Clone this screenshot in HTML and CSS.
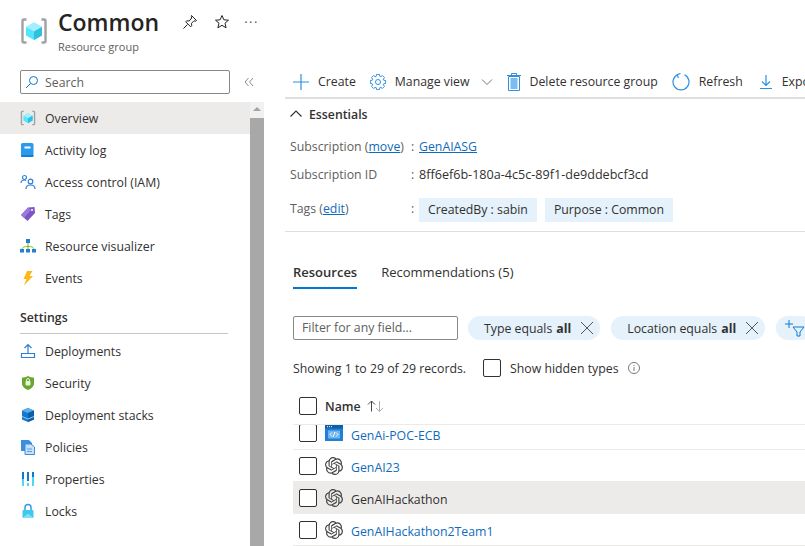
FILE: index.html
```html
<!DOCTYPE html>
<html lang="en">
<head>
    <meta charset="UTF-8">
    <title>Common - Resource group</title>
    <link rel="stylesheet" href="styles.css">
</head>
<body>
    <svg class="defs" width="0" height="0">
        <symbol id="rg" viewBox="0 0 28 28">
            <path d="M6.500 2.500H4a1.500 1.500 0 0 0-1.500 1.500v20A1.500 1.500 0 0 0 4 25.500h2.500M21.500 2.500H24A1.500 1.500 0 0 1 25.500 4v20a1.500 1.500 0 0 1-1.500 1.500h-2.500" fill="none" stroke="#a0a1a2" stroke-width="2.400"/>
            <path d="M14 5.500l8 4.500v8.500L14 23l-8-4.500V10z" fill="#50e6ff"/>
            <path d="M14 5.500l8 4.500-8 4.500L6 10z" fill="#a5eeff"/>
            <path d="M22 10v8.500L14 23v-8.500z" fill="#32bedd"/>
        </symbol>
        <symbol id="gpt" viewBox="0 0 24 24">
            <path fill="#444" d="M22.2819 9.8211a5.9847 5.9847 0 0 0-.5157-4.9108 6.0462 6.0462 0 0 0-6.5098-2.9A6.0651 6.0651 0 0 0 4.9807 4.1818a5.9847 5.9847 0 0 0-3.9977 2.9 6.0462 6.0462 0 0 0 .7427 7.0966 5.98 5.98 0 0 0 .511 4.9107 6.051 6.051 0 0 0 6.5146 2.9001A5.9847 5.9847 0 0 0 13.2599 24a6.0557 6.0557 0 0 0 5.7718-4.2058 5.9894 5.9894 0 0 0 3.9977-2.9001 6.0557 6.0557 0 0 0-.7475-7.0729zm-9.022 12.6081a4.4755 4.4755 0 0 1-2.8764-1.0408l.1419-.0804 4.7783-2.7582a.7948.7948 0 0 0 .3927-.6813v-6.7369l2.02 1.1686a.071.071 0 0 1 .038.052v5.5826a4.504 4.504 0 0 1-4.4945 4.4944zm-9.6607-4.1254a4.4708 4.4708 0 0 1-.5346-3.0137l.142.0852 4.783 2.7582a.7712.7712 0 0 0 .7806 0l5.8428-3.3685v2.3324a.0804.0804 0 0 1-.0332.0615L9.74 19.9502a4.4992 4.4992 0 0 1-6.1408-1.6464zM2.3408 7.8956a4.485 4.485 0 0 1 2.3655-1.9728V11.6a.7664.7664 0 0 0 .3879.6765l5.8144 3.3543-2.0201 1.1685a.0757.0757 0 0 1-.071 0l-4.8303-2.7865A4.504 4.504 0 0 1 2.3408 7.872zm16.5963 3.8558L13.1038 8.364 15.1192 7.2a.0757.0757 0 0 1 .071 0l4.8303 2.7913a4.4944 4.4944 0 0 1-.6765 8.1042v-5.6772a.79.79 0 0 0-.407-.667zm2.0107-3.0231l-.142-.0852-4.7735-2.7818a.7759.7759 0 0 0-.7854 0L9.409 9.2297V6.8974a.0662.0662 0 0 1 .0284-.0615l4.8303-2.7866a4.4992 4.4992 0 0 1 6.6802 4.66zM8.3065 12.863l-2.02-1.1638a.0804.0804 0 0 1-.038-.0567V6.0742a4.4992 4.4992 0 0 1 7.3757-3.4537l-.142.0805L8.704 5.459a.7948.7948 0 0 0-.3927.6813zm1.0976-2.3654l2.602-1.4998 2.6069 1.4998v2.9994l-2.5974 1.4997-2.6067-1.4997Z"/>
        </symbol>
    </svg>

    <header class="top">
        <svg class="rg-icon" width="28" height="28"><use href="#rg"/></svg>
        <div class="titles">
            <h1>Common</h1>
            <div class="subtitle">Resource group</div>
        </div>
        <div class="top-actions">
            <svg width="16" height="16" viewBox="0 0 16 16" fill="none" stroke="#222" stroke-width="1"><path d="M9.500 1.500l5 5-1 .6-1.500-.3-2.500 2.500.2 2.500-1 1-5-5 1-1 2.500.2L9.700 4 9.300 2.500zM5.500 10.500L1.500 14.500"/></svg>
            <svg width="16" height="16" viewBox="0 0 16 16" fill="none" stroke="#222" stroke-width="1"><path d="M8 1.500l1.900 4.300 4.600.4-3.500 3 1.100 4.600L8 11.300l-4.100 2.500L5 9.200l-3.500-3 4.600-.4z"/></svg>
            <span class="dots">···</span>
        </div>
    </header>

    <div class="layout">
        <aside class="side">
            <div class="side-main">
                <div class="search-row">
                    <div class="search">
                        <svg width="14" height="14" viewBox="0 0 14 14" fill="none" stroke="#0078d4" stroke-width="1"><circle cx="8.500" cy="5.500" r="4"/><path d="M5.500 8.500L1 13"/></svg>
                        <span>Search</span>
                    </div>
                    <span class="collapse">
                        <svg width="10" height="10" viewBox="0 0 10 10" fill="none" stroke="#8a8a8a"><path d="M4.500 1L1 5l3.500 4M9 1L5.500 5 9 9"/></svg>
                    </span>
                </div>
                <nav class="nav">
                    <a class="nav-item active">
                        <svg width="16" height="16"><use href="#rg"/></svg>
                        Overview
                    </a>
                    <a class="nav-item">
                        <svg width="16" height="16" viewBox="0 0 16 16"><rect x="1" y="1" width="12.500" height="14" rx="1.500" fill="#2a9bec"/><rect x="1" y="13" width="12.500" height="2" rx="1" fill="#1a7fd0"/><rect x="4.500" y="4.500" width="6" height="2" fill="#fff"/></svg>
                        Activity log
                    </a>
                    <a class="nav-item">
                        <svg width="16" height="16" viewBox="0 0 16 16" fill="none" stroke="#2f7fd6" stroke-width="1.200"><circle cx="4.500" cy="3.500" r="2"/><path d="M1 9c0-2 1.500-3 3.500-3 .6 0 1.200.1 1.700.4"/><circle cx="10.500" cy="7.500" r="2.300"/><path d="M6 15c0-2.500 2-4 4.500-4s4.500 1.500 4.500 4"/></svg>
                        Access control (IAM)
                    </a>
                    <a class="nav-item">
                        <svg width="16" height="16" viewBox="0 0 16 16"><path d="M1 9l7-7.500 6.500-.5.500 6-7.500 8z" fill="#7d55c7"/><path d="M1 9l7-7.500 3 2.500L4 12z" fill="#9b7ad8"/><circle cx="12" cy="4" r="1" fill="#fff"/></svg>
                        Tags
                    </a>
                    <a class="nav-item">
                        <svg width="16" height="16" viewBox="0 0 16 16"><path d="M8 4v8M2 12c0-3 2.500-3.500 6-3.500s6 .5 6 3.500" fill="none" stroke="#7fba00"/><rect x="6" y="1" width="4" height="4" fill="#1f80d8"/><rect x="0" y="11" width="4" height="3.500" fill="#1f80d8"/><rect x="6" y="11" width="4" height="3.500" fill="#1f80d8"/><rect x="12" y="11" width="4" height="3.500" fill="#1f80d8"/></svg>
                        Resource visualizer
                    </a>
                    <a class="nav-item">
                        <svg width="16" height="16" viewBox="0 0 16 16"><path d="M7 1h5.500L9.500 6H13L4 15.500 6.500 9H3.500z" fill="#fcb919"/></svg>
                        Events
                    </a>
                    <div class="nav-group">Settings</div>
                    <a class="nav-item">
                        <svg width="16" height="16" viewBox="0 0 16 16" fill="none" stroke="#2f7fd6" stroke-width="1.200"><path d="M8 10V1.500M4.500 5L8 1.500 11.500 5M1.500 10.500h13v4h-13z"/></svg>
                        Deployments
                    </a>
                    <a class="nav-item">
                        <svg width="16" height="16" viewBox="0 0 16 16"><path d="M8 1c2 1.200 3.800 1.500 6 1.500v6c0 3-3 5.500-6 6.500-3-1-6-3.500-6-6.500v-6C4.200 2.500 6 2.200 8 1z" fill="#6aa62e"/><rect x="5.500" y="6" width="5" height="4.500" rx="1" fill="#e6f4d7"/><path d="M6.500 6V5a1.500 1.500 0 0 1 3 0v1" fill="none" stroke="#e6f4d7"/></svg>
                        Security
                    </a>
                    <a class="nav-item">
                        <svg width="16" height="16" viewBox="0 0 16 16"><path d="M8 1l6 2.500v9L8 15l-6-2.500v-9z" fill="#1a78cc"/><path d="M8 1l6 2.500L8 6 2 3.500z" fill="#5ab0ec"/><path d="M8 6l6-2.500v9L8 15z" fill="#0f5ea8"/><path d="M2 9.500l6 2.500 6-2.500" fill="none" stroke="#8ccdf6"/></svg>
                        Deployment stacks
                    </a>
                    <a class="nav-item">
                        <svg width="16" height="16" viewBox="0 0 16 16"><path d="M1 1h8l3 3v8H1z" fill="#3b8ee0"/><path d="M5 5h6l3.500 3v7.500H5z" fill="#c8e0f8" stroke="#3b8ee0"/><path d="M7 10h5M7 12.500h5" stroke="#5a9fe6"/></svg>
                        Policies
                    </a>
                    <a class="nav-item">
                        <svg width="16" height="16" viewBox="0 0 16 16"><rect x="2" y="1" width="2" height="14" fill="#0f78d4"/><rect x="2" y="8" width="2" height="7" fill="#50d8f0"/><rect x="7" y="1" width="2" height="9" fill="#0f78d4"/><rect x="7" y="12" width="2" height="3" fill="#50d8f0"/><rect x="12" y="1" width="2" height="14" fill="#0f78d4"/><rect x="12" y="6" width="2" height="9" fill="#50d8f0"/></svg>
                        Properties
                    </a>
                    <a class="nav-item">
                        <svg width="16" height="16" viewBox="0 0 16 16"><path d="M5 7V4.500a3 3 0 0 1 6 0V7" fill="none" stroke="#2f9fe0" stroke-width="1.500"/><rect x="2.500" y="7" width="11" height="8" rx="1" fill="#40c8ee"/><path d="M2.500 15L8 10.500l5.500 4.500z" fill="#7de0f6"/></svg>
                        Locks
                    </a>
                </nav>
            </div>
            <div class="scrollbar">
                <span class="scroll-up"></span>
                <div class="scroll-thumb"></div>
            </div>
        </aside>

        <main class="content">
            <div class="toolbar">
                <span class="tool">
                    <svg width="16" height="16" viewBox="0 0 16 16" stroke="#2f8fe0" stroke-width="1.200"><path d="M8 0v16M0 8h16"/></svg>
                    Create
                </span>
                <span class="tool">
                    <svg width="16" height="16" viewBox="0 0 16 16" fill="none" stroke="#2f8fe0" stroke-width="1" stroke-linejoin="round"><circle cx="8" cy="8" r="2.500"/><path d="M15.660 6.510V9.490L13.740 9.750 13.300 10.820 14.470 12.360 12.360 14.470 10.820 13.300 9.750 13.740 9.490 15.660H6.510L6.250 13.740 5.180 13.300 3.640 14.470 1.530 12.360 2.700 10.820 2.260 9.750 .34 9.490V6.510L2.260 6.250 2.700 5.180 1.530 3.640 3.640 1.530 5.180 2.700 6.250 2.260 6.510 .34H9.490L9.750 2.260 10.820 2.700 12.360 1.530 14.470 3.640 13.300 5.180 13.740 6.250Z"/></svg>
                    Manage view
                    <svg class="chev" width="12" height="12" viewBox="0 0 12 12" fill="none" stroke="#777"><path d="M1 3.500l5 5 5-5"/></svg>
                </span>
                <span class="tool">
                    <svg width="14" height="18" viewBox="0 0 14 18"><path d="M0 2.500h14M4.500 2.500V.5h5v2" fill="none" stroke="#2f8fe0"/><path d="M1.500 3.500h11v14h-11z" fill="none" stroke="#2f8fe0"/><rect x="3.500" y="5" width="7" height="11" fill="#7dbcee"/></svg>
                    Delete resource group
                </span>
                <span class="tool">
                    <svg width="18" height="18" viewBox="0 0 18 18" fill="none" stroke="#2f8fe0" stroke-width="1.200"><path d="M12.500 1.700A8 8 0 1 1 5.500 1.700M8.500 .5L5.200 1.700l1.200 3.300"/></svg>
                    Refresh
                </span>
                <span class="tool tool-export">
                    <svg width="14" height="16" viewBox="0 0 14 16" fill="none" stroke="#2f8fe0" stroke-width="1.200"><path d="M7 1v10M3 7.500l4 4 4-4M1 14.500h12"/></svg>
                    Export to CSV
                </span>
            </div>

            <section class="essentials">
                <div class="ess-head">
                    <svg width="12" height="12" viewBox="0 0 12 12" fill="none" stroke="#333" stroke-width="1.200"><path d="M.5 8.500L6 3l5.500 5.500"/></svg>
                    <span>Essentials</span>
                </div>
                <div class="ess-row row-sub">
                    <span class="ess-label">Subscription (<a href="#">move</a>)</span>
                    <span class="ess-colon">:</span>
                    <a href="#">GenAIASG</a>
                </div>
                <div class="ess-row row-id">
                    <span class="ess-label">Subscription ID</span>
                    <span class="ess-colon">:</span>
                    <span class="sub-id">8ff6ef6b-180a-4c5c-89f1-de9ddebcf3cd</span>
                </div>
                <div class="ess-row row-tags">
                    <span class="ess-label">Tags (<a href="#">edit</a>)</span>
                    <span class="ess-colon">:</span>
                    <span class="tag">CreatedBy : sabin</span>
                    <span class="tag">Purpose : Common</span>
                </div>
            </section>

            <section class="resources">
                <div class="tabs">
                    <span class="tab selected">Resources</span>
                    <span class="tab">Recommendations (5)</span>
                </div>
                <div class="filters">
                    <div class="filter-input">Filter for any field...</div>
                    <span class="pill">Type equals <b>all</b><svg width="14" height="14" viewBox="0 0 14 14" stroke="#555"><path d="M1 1l12 12M13 1L1 13"/></svg></span>
                    <span class="pill">Location equals <b>all</b><svg width="14" height="14" viewBox="0 0 14 14" stroke="#555"><path d="M1 1l12 12M13 1L1 13"/></svg></span>
                    <span class="pill pill-add">
                        <svg width="20" height="18" viewBox="0 0 20 18" fill="none" stroke="#0f78d4"><path d="M0 5h8M4 1v8M8 8h11l-4 5v4h-3v-4z"/></svg>
                    </span>
                </div>
                <div class="records">
                    <span class="records-count">Showing 1 to 29 of 29 records.</span>
                    <span class="check"></span>
                    <span class="hidden-types">Show hidden types</span>
                    <svg width="12" height="12" viewBox="0 0 12 12" fill="none" stroke="#777"><circle cx="6" cy="6" r="5.500"/><path d="M6 5v4M6 3v1"/></svg>
                </div>
                <div class="table">
                    <div class="table-head">
                        <span class="check"></span>
                        <span class="col-name">Name</span>
                        <svg class="sort" width="17" height="12" viewBox="0 0 17 12" fill="none" stroke="#444"><path d="M4.500 11.500V1M1 4.500L4.500 1 8 4.500"/><path d="M12.500 1v10.500M9 8l3.500 3.500L16 8" stroke="#b3b0ad"/></svg>
                    </div>
                    <div class="table-body">
                        <div class="table-row first">
                            <span class="check"></span>
                            <svg width="18" height="18" viewBox="0 0 18 18"><rect y="1" width="18" height="16" fill="#1f80d8"/><rect y="1" width="18" height="3.500" fill="#0f5ea8"/><path d="M2 2.700h1M4 2.700h1M6 2.700h1" stroke="#fff"/><rect x="3" y="6.500" width="12" height="8" fill="#6fb3ee"/><path d="M7 8.500L5 10.500l2 2M11 8.500l2 2-2 2M10 8l-2 5" fill="none" stroke="#fff"/></svg>
                            <a href="#">GenAi-POC-ECB</a>
                        </div>
                        <div class="table-row">
                            <span class="check"></span>
                            <svg width="18" height="18"><use href="#gpt"/></svg>
                            <a href="#">GenAI23</a>
                        </div>
                        <div class="table-row hover">
                            <span class="check"></span>
                            <svg width="18" height="18"><use href="#gpt"/></svg>
                            <a href="#">GenAIHackathon</a>
                        </div>
                        <div class="table-row">
                            <span class="check"></span>
                            <svg width="18" height="18"><use href="#gpt"/></svg>
                            <a href="#">GenAIHackathon2Team1</a>
                        </div>
                    </div>
                </div>
            </section>
        </main>
    </div>
</body>
</html>
```

FILE: styles.css
```css
*{
    margin: 0;
    padding: 0;
    box-sizing: border-box;
}
html,body{
    height: 100%;
    overflow: hidden;
}
body{
    font-family: "Open Sans", "Liberation Sans", sans-serif;
    font-size: 12.3px;
    color: #323130;
    background: #fff;
    display: flex;
    flex-direction: column;
}
a{
    color: #0f6cbd;
    text-decoration: none;
}
svg{
    flex: none;
    display: block;
}
.defs{
    position: absolute;
}

/* page title */
.top{
    display: flex;
    height: 70px;
    padding: 7px 0 0 20px;
    flex: none;
}
.rg-icon{
    margin: 10px 10px 0 0;
}
.titles h1{
    font-size: 23px;
    line-height: 30px;
    font-weight: 600;
    color: #252423;
}
.subtitle{
    font-size: 11px;
    line-height: 16px;
    margin-top: 2px;
    color: #605e5c;
}
.top-actions{
    display: flex;
    align-items: center;
    gap: 16px;
    height: 30px;
    margin-left: 23px;
}
.dots{
    font-size: 13px;
    color: #555;
    letter-spacing: 1.5px;
    margin-left: -2px;
}

.layout{
    display: flex;
    flex: 1;
    min-height: 0;
}

/* left menu */
.side{
    width: 285px;
    flex: none;
    display: flex;
    padding-right: 21px;
}
.side-main{
    width: 250px;
}
.search-row{
    display: flex;
    align-items: center;
    height: 32px;
    padding: 0 0 8px 20px;
}
.search{
    width: 210px;
    height: 24px;
    flex: none;
    border: 1px solid #8a8886;
    border-radius: 2px;
    display: flex;
    align-items: center;
    gap: 6px;
    padding-left: 4px;
    color: #605e5c;
}
.collapse{
    margin-left: 14px;
}
.nav-item{
    display: flex;
    align-items: center;
    gap: 9px;
    height: 32px;
    padding-left: 20px;
    color: #323130;
}
.nav-item.active{
    background: #edebe9;
}
.nav-group{
    margin: 9px 22px 1px 20px;
    height: 31px;
    line-height: 30px;
    font-weight: 600;
    border-bottom: 1px solid #c8c6c4;
}
.scrollbar{
    width: 14px;
    height: 100%;
    background: #f1f1f1;
    margin-top: 32px;
}
.scroll-up{
    display: block;
    height: 16px;
    position: relative;
}
.scroll-up:after{
    content: "";
    position: absolute;
    left: 3px;
    top: 5px;
    border: 4px solid transparent;
    border-top: 0;
    border-bottom: 4px solid #a3a3a3;
}
.scroll-thumb{
    height: 100%;
    background: #a8a8a8;
}

/* right side */
.content{
    flex: 1;
    min-width: 0;
    overflow: hidden;
    margin-top: -4px;
}
.toolbar{
    display: flex;
    align-items: center;
    height: 33px;
    padding-left: 8px;
    gap: 14px;
    border-bottom: 2px solid #e1dfdd;
    white-space: nowrap;
}
.tool{
    display: flex;
    align-items: center;
    gap: 9px;
    color: #323130;
}
.tool-export{
    margin-left: 2px;
}
.chev{
    margin-left: 2px;
}
.essentials{
    border-bottom: 1px solid #e1dfdd;
    height: 133px;
    padding: 0 0 0 5px;
}
.ess-head{
    display: flex;
    align-items: center;
    gap: 7px;
    height: 30px;
    font-weight: 600;
}
.ess-row{
    display: flex;
    align-items: center;
    color: #323130;
}
.ess-row a{
    text-decoration: underline;
}
.row-sub{
    height: 20px;
    margin-top: 7px;
}
.row-id{
    height: 20px;
    margin-top: 8px;
}
.row-tags{
    height: 24px;
    margin-top: 14px;
}
.row-tags .ess-label,.row-tags .ess-colon{
    margin-bottom: 3px;
}
.sub-id{
    font-size: 12.6px;
}
.ess-label{
    width: 121px;
    color: #605e5c;
}
.ess-colon{
    width: 8px;
    color: #605e5c;
}
.tag{
    background: #e5f1fb;
    height: 24px;
    line-height: 24px;
    padding: 0 9px;
    margin-right: 8px;
}

.resources{
    padding-left: 8px;
}
.tabs{
    display: flex;
    gap: 24px;
    margin-top: 26px;
}
.tab{
    height: 31px;
    font-size: 13px;
    line-height: 28px;
}
.tab.selected{
    font-weight: 600;
    border-bottom: 2px solid #0078d4;
}
.filters{
    display: flex;
    gap: 11px;
    margin-top: 27px;
    white-space: nowrap;
}
.filters > *{
    flex: none;
}
.filter-input{
    width: 165px;
    height: 24px;
    line-height: 22px;
    padding-left: 8px;
    margin-right: -1px;
    border: 1px solid #8a8886;
    border-radius: 2px;
    color: #605e5c;
}
.pill{
    display: flex;
    align-items: center;
    gap: 9px;
    height: 24px;
    border-radius: 12px;
    background: #e5f1fb;
    padding: 0 6px 0 16px;
}
.pill b{
    margin-left: -5px;
}
.pill-add{
    padding: 0 8px 0 9px;
}
.records{
    display: flex;
    align-items: center;
    height: 20px;
    margin-top: 18px;
}
.records-count{
    width: 190px;
    flex: none;
    margin-top: 1px;
}
.check{
    display: block;
    flex: none;
    width: 18px;
    height: 18px;
    background: #fff;
    border: 1px solid #323130;
    border-radius: 2px;
}
.hidden-types{
    margin: 0 9px;
}
.table{
    margin-top: 14px;
}
.table-head{
    display: flex;
    align-items: center;
    height: 33px;
    padding: 0 0 4px 6px;
    border-bottom: 1px solid #edebe9;
    font-weight: 600;
}
.col-name{
    margin-left: 8px;
}
.sort{
    margin-left: 6px;
}
.table-body{
    height: 130px;
    overflow: hidden;
}
.table-row{
    display: flex;
    align-items: center;
    gap: 8px;
    height: 32px;
    padding-left: 6px;
    border-bottom: 1px solid #edebe9;
}
.table-row a{
    padding-top: 4px;
}
.table-row.first{
    height: 25px;
    padding-bottom: 8px;
}
.table-row.hover{
    background: #edebe9;
}
.table-row.hover a{
    color: #323130;
}
```
